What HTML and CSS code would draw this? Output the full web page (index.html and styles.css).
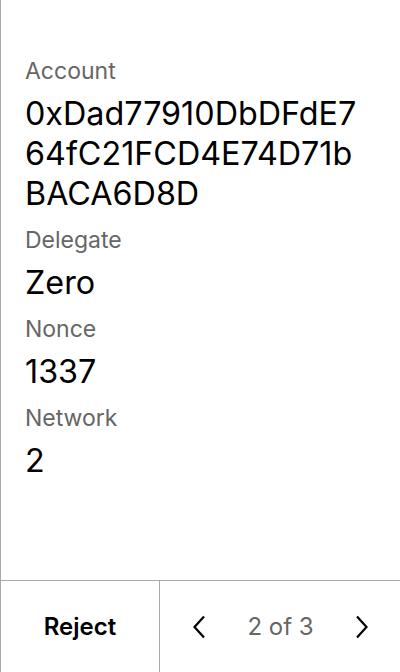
FILE: index.html
```html
<!DOCTYPE html>
<html>
<head>
<meta charset="utf-8">
<link rel="stylesheet" href="styles.css">
</head>
<body>
<div class="screen">
  <main class="content">
    <div class="field">
      <div class="label">Account</div>
      <div class="value">0xDad77910DbDFdE7<br>64fC21FCD4E74D71b<br>BACA6D8D</div>
    </div>
    <div class="field">
      <div class="label">Delegate</div>
      <div class="value">Zero</div>
    </div>
    <div class="field">
      <div class="label">Nonce</div>
      <div class="value">1337</div>
    </div>
    <div class="field">
      <div class="label">Network</div>
      <div class="value">2</div>
    </div>
  </main>
  <footer class="footer">
    <div class="reject">Reject</div>
    <div class="pager">
      <svg class="chev" width="14" height="24" viewBox="0 0 14 24"><path d="M12 1.5 L2.5 12 L12 22.5" fill="none" stroke="#000" stroke-width="2.2"/></svg>
      <span class="count">2 of 3</span>
      <svg class="chev" width="14" height="24" viewBox="0 0 14 24"><path d="M2 1.5 L11.5 12 L2 22.5" fill="none" stroke="#000" stroke-width="2.2"/></svg>
    </div>
  </footer>
</div>
</body>
</html>
```
FILE: styles.css
```css
* { box-sizing: border-box; }
html, body { margin: 0; padding: 0; background: #fff; }
body { font-family: Inter, "Noto Sans", sans-serif; color: #000; }
.screen {
  width: 400px;
  height: 672px;
  border-left: 1px solid #a8a8a8;
  display: flex;
  flex-direction: column;
}
.content {
  flex: 1;
  padding: 57px 24px 0 24px;
}
.field { margin-bottom: 12px; }
.label {
  font-size: 23px;
  line-height: 28px;
  color: #666;
  margin-bottom: 9px;
}
.value {
  font-size: 32.3px;
  line-height: 40px;
  color: #000;
}
.footer {
  height: 92px;
  border-top: 1px solid #a8a8a8;
  display: flex;
}
.reject {
  width: 159px;
  border-right: 1px solid #a8a8a8;
  display: flex;
  align-items: center;
  justify-content: center;
  font-size: 24px;
  font-weight: 600;
}
.pager {
  flex: 1;
  display: flex;
  align-items: center;
  justify-content: space-between;
  padding: 0 31px 0 32px;
}
.count {
  font-size: 24px;
  color: #666;
}
.chev { display: block; }
```
